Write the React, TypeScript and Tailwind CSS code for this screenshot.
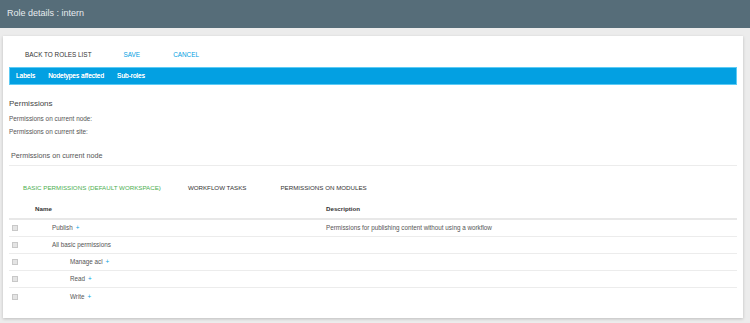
import React from "react";

const rows = [
  { name: "Publish", plus: true, indent: "pl-[17px]", desc: "Permissions for publishing content without using a workflow" },
  { name: "All basic permissions", plus: false, indent: "pl-[17px]", desc: "" },
  { name: "Manage acl", plus: true, indent: "pl-[35px]", desc: "" },
  { name: "Read", plus: true, indent: "pl-[35px]", desc: "" },
  { name: "Write", plus: true, indent: "pl-[35px]", desc: "" },
];

export default function App() {
  return (
    <div className="w-[750px] h-[323px] overflow-hidden bg-[#ececec] font-['Liberation_Sans',Arial,sans-serif]">
      <div className="h-[28px] bg-[#566d79] flex items-center pl-[7px] text-[9px] text-[#e6ecef]">
        Role details : intern
      </div>
      <div className="pt-[8px] pl-[3px] pr-[7px]">
        <div className="bg-white h-[282px] px-[6px] shadow-[0_1px_3px_rgba(0,0,0,0.2)]">
          <div className="h-[31px] pt-[6px] flex items-center pl-[16px] text-[6.4px] uppercase">
            <span className="text-[#333]">Back to roles list</span>
            <span className="ml-[32px] text-[#03a0e2]">Save</span>
            <span className="ml-[33px] text-[#03a0e2]">Cancel</span>
          </div>
          <div className="h-[18px] bg-[#03a0e2] border border-[#5ccbf5] flex items-center pl-[6px] gap-[13px] text-[6.5px] text-white [text-shadow:0_0_0.4px_#fff]">
            <span>Labels</span>
            <span>Nodetypes affected</span>
            <span>Sub-roles</span>
          </div>
          <div className="mt-[13px] h-[12px] flex items-center text-[8px] text-[#444]">Permissions</div>
          <div className="mt-[2px] h-[13px] flex items-center text-[6.4px] text-[#555]">Permissions on current node:</div>
          <div className="h-[13px] flex items-center text-[6.4px] text-[#555]">Permissions on current site:</div>
          <div className="h-[28px] pt-[10px] flex items-center pl-[2px] text-[7.2px] text-[#555] border-b border-[#ececec]">
            Permissions on current node
          </div>
          <div className="h-[34px] pt-[10px] flex items-center pl-[14px] text-[6.2px] uppercase">
            <span className="text-[#4caf50]">Basic permissions (default workspace)</span>
            <span className="ml-[27px] text-[#333]">Workflow tasks</span>
            <span className="ml-[34px] text-[#333]">Permissions on modules</span>
          </div>
          <div className="grid grid-cols-[26px_291px_1fr] h-[20px] items-center border-b-2 border-[#e8e8e8] text-[6.2px] font-bold text-[#333]">
            <span />
            <span>Name</span>
            <span>Description</span>
          </div>
          {rows.map((r, i) => (
            <div
              key={r.name}
              className={`grid grid-cols-[26px_291px_1fr] h-[17px] items-center text-[6.3px] text-[#555] ${
                i < rows.length - 1 ? "border-b border-[#ececec]" : ""
              }`}
            >
              <span className="pl-[3px] flex">
                <span className="w-[6px] h-[6px] bg-[#e4e4e4] border border-[#c8c8c8]" />
              </span>
              <span className={r.indent}>
                {r.name}
                {r.plus && <span className="ml-[3px] text-[#03a0e2]">+</span>}
              </span>
              <span>{r.desc}</span>
            </div>
          ))}
        </div>
      </div>
    </div>
  );
}
